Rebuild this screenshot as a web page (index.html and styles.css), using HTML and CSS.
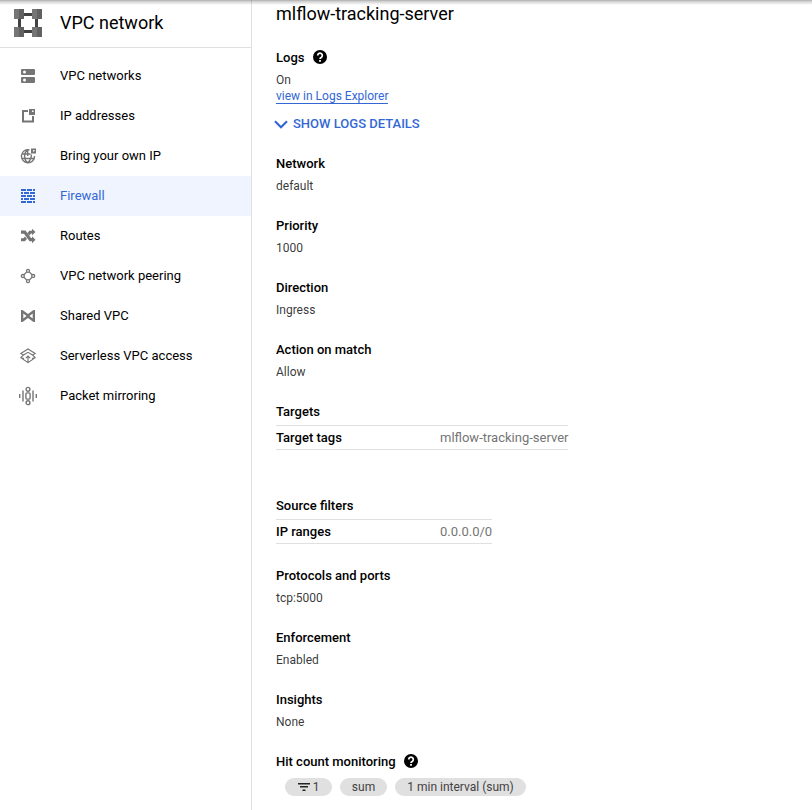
FILE: index.html
```html
<!DOCTYPE html>
<html lang="en">
<head>
<meta charset="utf-8">
<title>VPC network</title>
<link rel="stylesheet" href="styles.css">
</head>
<body>
<div class="app">
  <aside class="sidebar">
    <header class="product">
      <svg class="product-icon" width="28" height="28" viewBox="0 0 28 28">
        <path fill="#424242" d="M10 4h8v3h-8zM10 21h8v3h-8zM4 10h3v8H4zM21 10h3v8h-3z"/>
        <path fill="#757575" d="M0 0h5v10H0zM18 0h5v10h-5zM0 18h5v10H0zM18 18h5v10h-5z"/>
        <path fill="#616161" d="M5 0h5v10H5zM23 0h5v10h-5zM5 18h5v10H5zM23 18h5v10h-5z"/>
      </svg>
      <h1>VPC network</h1>
    </header>
    <nav>
      <a class="item"><svg viewBox="0 0 18 18"><path fill-rule="evenodd" d="M3 2h12q1 0 1 1v4q0 1-1 1H3Q2 8 2 7V3q0-1 1-1zM5.500 3.500a1.500 1.500 0 1 0 0 3 1.500 1.500 0 0 0 0-3zM3 10h12q1 0 1 1v4q0 1-1 1H3q-1 0-1-1v-4q0-1 1-1zM5.500 11.500a1.500 1.500 0 1 0 0 3 1.500 1.500 0 0 0 0-3z"/></svg>VPC networks</a>
      <a class="item"><svg viewBox="0 0 18 18"><path fill-rule="evenodd" d="M3 3h6v2H5v8.500h8V9h2v6.500H3zM10 2h6v6h-6zM13 3.500v1.500h1.500V3.500z"/></svg>IP addresses</a>
      <a class="item"><svg viewBox="0 0 18 18"><g fill="none" stroke="#757575" stroke-width="1.400"><path d="M10.500 2.800A6.600 6.600 0 1 0 15.600 9M2.500 7h9M2.500 11.500h12.500M8.700 2.500v6.500M8.700 2.700C4.500 6 4.500 12.500 8.700 15.800C11.500 13.500 12.500 11 12.300 7.500"/></g><path fill-rule="evenodd" d="M12 1.500h5v5h-5zM14 3v1.500h1.500V3z"/></svg>Bring your own IP</a>
      <a class="item active"><svg viewBox="0 0 18 18" shape-rendering="crispEdges"><path d="M2 2h5v2H2zM8 2h5v2H8zM14 2h2v2h-2zM2 5h2v2H2zM5 5h5v2H5zM11 5h5v2h-5zM2 8h5v2H2zM8 8h5v2H8zM14 8h2v2h-2zM2 11h2v2H2zM5 11h5v2H5zM11 11h5v2h-5zM2 14h5v2H2zM8 14h5v2H8zM14 14h2v2h-2z"/></svg>Firewall</a>
      <a class="item"><svg viewBox="0 0 18 18"><path d="M2 3.500h4.500l5.500 7.500h1V9.300l3.500 3.400-3.500 3.500v-2h-2.500L5 6.800H2zM2 11.300h2.300l1.700-1.800 2 2.500-2.200 2.300H2zM10.300 3.800H13v-2L16.500 5 13 8.300V6.500h-1l-1.500 2-2-2.500z"/></svg>Routes</a>
      <a class="item"><svg viewBox="0 0 18 18"><g fill="none" stroke="#757575" stroke-width="1.300"><circle cx="9" cy="3.800" r="1.500"/><circle cx="14.200" cy="9" r="1.500"/><circle cx="9" cy="14.200" r="1.500"/><circle cx="3.800" cy="9" r="1.500"/><path d="M7.800 4.900 4.900 7.800M10.200 4.900l2.900 2.900M4.900 10.200l2.900 2.900M13.100 10.200l-2.900 2.900"/></g></svg>VPC network peering</a>
      <a class="item"><svg viewBox="0 0 18 18"><path fill-rule="evenodd" d="M2 3h1.500L9 7l5.500-4H16v12h-1.500L9 11l-5.500 4H2zM4.300 6.400v5.200L7.500 9zM13.700 6.400v5.200L10.500 9z"/></svg>Shared VPC</a>
      <a class="item"><svg viewBox="0 0 18 18"><g fill="none" stroke="#757575" stroke-width="1.100"><path d="M4.500 8 1.800 6.500 9 2l7.200 4.500L13.500 8M4.500 8 9 5.300 13.500 8M4.500 8 1.800 10.700 9 15.700l7.200-5L13.500 8M1.800 10.700 5 11.500M16.200 10.700 13 11.500M9 15.500V9.300M6.800 11.200 9 9l2.200 2.200"/></g></svg>Serverless VPC access</a>
      <a class="item"><svg viewBox="0 0 18 18"><g fill="none" stroke="#757575" stroke-width="1.400"><path d="M.7 7v4M4 3.500v11M14 3.500v11M17.300 7v4"/><circle cx="9" cy="2.300" r="1.900"/><circle cx="9" cy="15.700" r="1.900"/><rect x="6.900" y="5.900" width="4.200" height="6.200" rx="1.200"/></g></svg>Packet mirroring</a>
    </nav>
  </aside>
  <main class="details">
    <h2>mlflow-tracking-server</h2>
    <section class="logs">
      <h3>Logs <svg class="help" viewBox="0 0 14 14"><circle cx="7" cy="7" r="7"/><path d="M4.700 5.400a2.300 2.300 0 1 1 3.500 2Q7 8.100 7 9" fill="none" stroke="#fff" stroke-width="1.700"/><path fill="#fff" d="M6.100 10h1.800v1.700H6.100z"/></svg></h3>
      <p>On</p>
      <a class="explorer">view in Logs Explorer</a>
      <button class="toggle"><svg width="14" height="9" viewBox="0 0 14 9"><path d="M1 1.300l6 6 6-6" fill="none" stroke="#3367d6" stroke-width="2.200"/></svg>SHOW LOGS DETAILS</button>
    </section>
    <section class="field"><h3>Network</h3><p>default</p></section>
    <section class="field"><h3>Priority</h3><p>1000</p></section>
    <section class="field"><h3>Direction</h3><p>Ingress</p></section>
    <section class="field"><h3>Action on match</h3><p>Allow</p></section>
    <section class="targets">
      <h3>Targets</h3>
      <div class="pair"><b>Target tags</b><span>mlflow-tracking-server</span></div>
    </section>
    <section class="sources">
      <h3>Source filters</h3>
      <div class="pair"><b>IP ranges</b><span>0.0.0.0/0</span></div>
    </section>
    <section class="field"><h3>Protocols and ports</h3><p>tcp:5000</p></section>
    <section class="field"><h3>Enforcement</h3><p>Enabled</p></section>
    <section class="field"><h3>Insights</h3><p>None</p></section>
    <section class="monitoring">
      <h3>Hit count monitoring <svg class="help" viewBox="0 0 14 14"><circle cx="7" cy="7" r="7"/><path d="M4.700 5.400a2.300 2.300 0 1 1 3.500 2Q7 8.100 7 9" fill="none" stroke="#fff" stroke-width="1.700"/><path fill="#fff" d="M6.100 10h1.800v1.700H6.100z"/></svg></h3>
      <div class="chips">
        <span class="chip filter"><svg width="12" height="8" viewBox="0 0 12 8"><path fill="#212121" d="M0 0h12v1.500H0zM2 3h8v1.500H2zM4.500 6.500h3V8h-3z"/></svg>1</span>
        <span class="chip sum">sum</span>
        <span class="chip interval">1 min interval (sum)</span>
      </div>
    </section>
  </main>
  <div class="top-shadow"></div>
</div>
</body>
</html>
```
FILE: styles.css
```css
* { box-sizing: border-box; }
body { margin: 0; background: #fff; font-family: Roboto, sans-serif; font-size: 13px; line-height: 20px; color: #000; }
h1, h2, h3, p { margin: 0; }
.app { display: flex; height: 810px; overflow: hidden; position: relative; }
.top-shadow { position: absolute; top: 0; left: 0; right: 0; height: 5px; background: linear-gradient(rgba(0,0,0,.32), rgba(0,0,0,.16) 35%, rgba(0,0,0,0)); }
.sidebar { width: 252px; flex: none; border-right: 1px solid #e0e0e0; }
.product { height: 48px; display: flex; align-items: center; padding: 0 0 1px 14px; gap: 18px; border-bottom: 1px solid #e0e0e0; }
.product h1 { font-size: 18px; font-weight: 400; line-height: 24px; }
.product-icon { shape-rendering: crispEdges; }
nav { padding-top: 8px; }
.item { height: 40px; display: flex; align-items: center; gap: 23px; padding-left: 19px; color: #000; }
.item svg { width: 18px; height: 18px; fill: #757575; flex: none; overflow: visible; }
.active { background: #f0f4ff; color: #3367d6; }
.active svg { fill: #3367d6; }
.details { flex: 1; padding: 2px 0 0 24px; }
h2 { font-size: 18px; font-weight: 400; line-height: 24px; }
h3 { display: flex; align-items: center; gap: 9px; font-size: 13px; font-weight: 500; line-height: 20px; }
.help { width: 14px; height: 14px; margin-bottom: 2px; }
.monitoring h3 { gap: 8px; }
p { font-size: 12px; line-height: 20px; color: rgba(0,0,0,.8); }
.logs { margin-top: 22px; height: 106px; }
.logs p { margin-top: 4px; line-height: 16px; }
.explorer { display: block; width: max-content; height: 16px; font-size: 12px; line-height: 16px; color: #3367d6; border-bottom: 1px solid #3367d6; }
.toggle { display: flex; align-items: center; gap: 5px; margin: 10px 0 0 -2px; padding: 0; border: 0; background: none; font: 500 13px/20px Roboto, sans-serif; color: #3367d6; }
.field { height: 62px; }
.field p { margin-top: 2px; }
.targets { height: 94px; }
.sources { height: 70px; }
.pair { display: flex; width: max-content; height: 25px; margin-top: 3px; line-height: 23px; border: solid #e0e0e0; border-width: 1px 0; }
.pair b { width: 164px; font-weight: 500; }
.pair span { color: #757575; }
.chips { display: flex; gap: 8px; margin: 6px 0 0 9px; }
.chip { display: flex; align-items: center; justify-content: center; height: 18px; border-radius: 9px; background: #e0e0e0; color: #424242; font-size: 12px; line-height: 18px; }
.filter { width: 47px; gap: 3px; }
.sum { width: 47px; }
.interval { width: 131px; }
```
